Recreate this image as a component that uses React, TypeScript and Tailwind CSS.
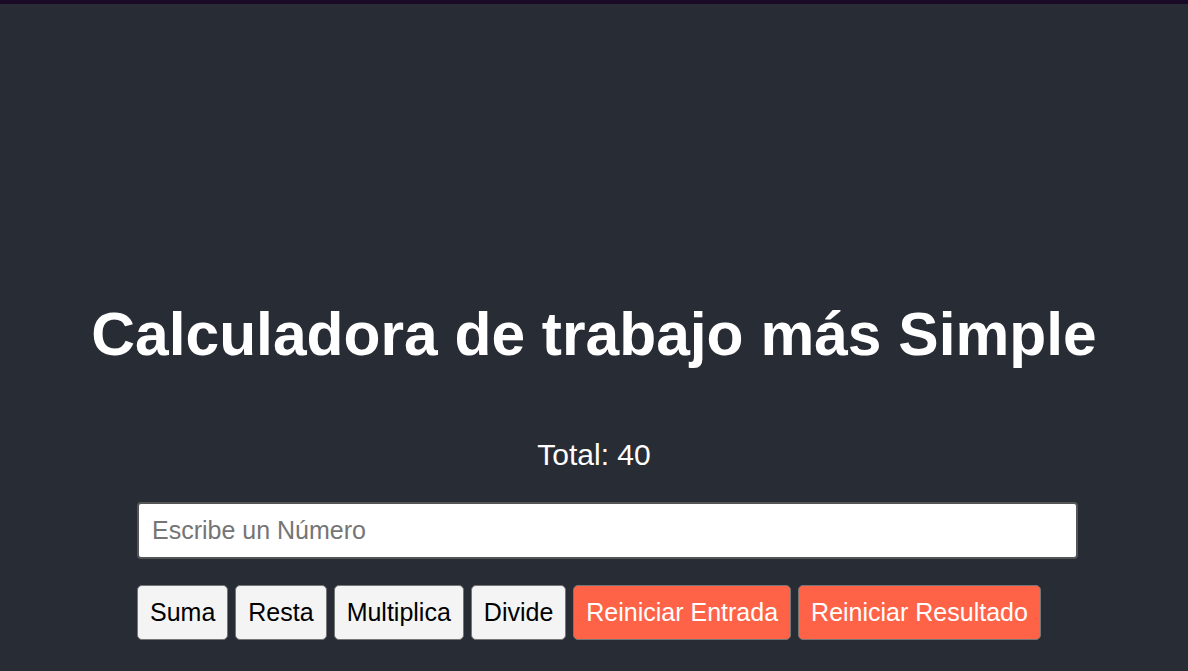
export default function App() {
  const ops = ["Suma", "Resta", "Multiplica", "Divide"];
  return (
    <div className="min-h-screen bg-[#282c34] font-['Liberation_Sans',Arial,sans-serif]">
      <div className="h-[4px] bg-[#1a0a26]" />
      <div className="flex flex-col items-center pt-[286px]">
        <h1 className="text-[60.5px] font-bold leading-[88px] text-white">
          Calculadora de trabajo más Simple
        </h1>
        <p className="mt-[60px] text-[30px] leading-[34px] text-white">Total: 40</p>
      </div>
      <div className="pl-[137px] pt-[30px]">
        <input
          type="text"
          placeholder="Escribe un Número"
          className="block h-[57px] w-[941px] rounded-[4px] border-2 border-[#555] bg-white px-[13px] text-[25px] text-black placeholder:text-[#757575] outline-none"
        />
        <div className="mt-[26px] flex gap-[7px]">
          {ops.map((o) => (
            <button
              key={o}
              className="h-[55px] rounded-[5px] border border-[#767676] bg-[#f4f4f4] px-[12px] text-[25px] text-black"
            >
              {o}
            </button>
          ))}
          <button className="h-[55px] rounded-[5px] border border-[#767676] bg-[#ff6347] px-[12px] text-[25px] text-white">
            Reiniciar Entrada
          </button>
          <button className="h-[55px] rounded-[5px] border border-[#767676] bg-[#ff6347] px-[12px] text-[25px] text-white">
            Reiniciar Resultado
          </button>
        </div>
      </div>
    </div>
  );
}
